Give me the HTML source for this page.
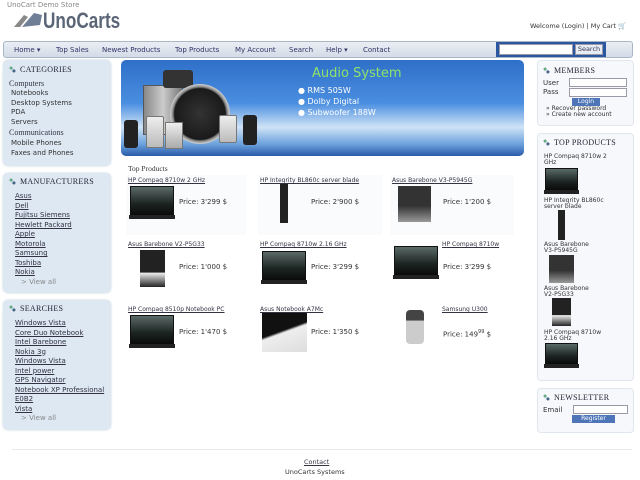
<!DOCTYPE html>
<html><head><meta charset="utf-8"><style>
*{margin:0;padding:0;box-sizing:border-box}
body{width:640px;height:480px;background:#fff;position:relative;overflow:hidden;font-family:"DejaVu Sans","Liberation Sans",sans-serif;font-size:7px;color:#333}
.a{position:absolute;white-space:nowrap}
a,.u{text-decoration:underline;color:#334}
.box{position:absolute;background:#dde8f3;border-radius:5px;box-shadow:0 0 2px #c8d4e0}
.rbox{position:absolute;background:#f6f8fb;border:1px solid #e0e6ee;border-radius:4px}
.h{font-family:"Liberation Serif",serif;font-size:8px;color:#223;letter-spacing:.3px}
.ic{display:inline-block;width:7px;height:7px;margin-right:4px;vertical-align:-1px;background:radial-gradient(circle at 30% 30%,#6a8 0,#6a8 20%,transparent 25%),radial-gradient(circle at 70% 70%,#468 0,#468 20%,transparent 25%)}
.nav span{position:absolute;top:4px;color:#336;font-size:7px}
.lap{position:absolute;background:linear-gradient(#5a6a66,#1c2422 60%,#0a0a0a);border:1px solid #111}
.lap:after{content:"";position:absolute;left:-2px;right:-2px;bottom:-4px;height:4px;background:#222}
.price{position:absolute;font-size:7px;color:#333}
.cell{position:absolute;background:#fafbfd}
</style></head><body>
<div class="a" style="left:7px;top:1px;font-size:7px;color:#888">UnoCart Demo Store</div>
<svg class="a" style="left:12px;top:11px" width="32" height="18"><path d="M2 16 L12 4 L16 6 L8 16Z" fill="#888"/><path d="M10 16 L22 2 L30 4 L28 14Z" fill="#6f7f95"/></svg>
<div class="a" style="left:43px;top:8px;font-family:'Liberation Sans',sans-serif;font-weight:bold;font-size:22px;color:#5a6577;transform:scaleX(0.78);transform-origin:0 0">UnoCarts</div>
<div class="a" style="left:530px;top:22px;font-size:6.5px;color:#333">Welcome (Login) | My Cart 🛒</div>

<div class="a nav" style="left:3px;top:41px;width:630px;height:17px;background:linear-gradient(#e9eef4,#d3dce7);border:1px solid #a9b6c6;border-radius:3px">
<span style="left:10px">Home ▾</span><span style="left:52px">Top Sales</span><span style="left:98px">Newest Products</span><span style="left:171px">Top Products</span><span style="left:231px">My Account</span><span style="left:285px">Search</span><span style="left:322px">Help ▾</span><span style="left:359px">Contact</span>
<div style="position:absolute;left:492px;top:0;width:110px;height:15px;background:#2b56a0"></div>
<div style="position:absolute;left:495px;top:2px;width:74px;height:11px;background:#fff;border:1px solid #99a"></div>
<div style="position:absolute;left:571px;top:2px;width:28px;height:11px;background:#e8edf4;border:1px solid #99a;font-size:6.5px;text-align:center;line-height:9px;color:#335">Search</div>
</div>

<div class="box" style="left:3px;top:60px;width:108px;height:106px"></div>
<div class="a h" style="left:9px;top:65px"><span class="ic"></span>CATEGORIES</div>
<div class="a" style="left:9px;top:79px;font-size:8px;color:#334;font-family:'Liberation Serif',serif">Computers</div>
<div class="a" style="left:11px;top:89px;line-height:9.5px">Notebooks<br>Desktop Systems<br>PDA<br>Servers</div>
<div class="a" style="left:9px;top:128px;font-size:8px;color:#334;font-family:'Liberation Serif',serif">Communications</div>
<div class="a" style="left:11px;top:139px;line-height:9.5px">Mobile Phones<br>Faxes and Phones</div>

<div class="box" style="left:3px;top:173px;width:108px;height:120px"></div>
<div class="a h" style="left:9px;top:177px"><span class="ic"></span>MANUFACTURERS</div>
<div class="a u" style="left:15px;top:192px;line-height:9.5px">Asus<br>Dell<br>Fujitsu Siemens<br>Hewlett Packard<br>Apple<br>Motorola<br>Samsung<br>Toshiba<br>Nokia</div>
<div class="a" style="left:21px;top:278px;color:#888">&gt; View all</div>

<div class="box" style="left:3px;top:300px;width:108px;height:130px"></div>
<div class="a h" style="left:9px;top:304px"><span class="ic"></span>SEARCHES</div>
<div class="a u" style="left:15px;top:319px;line-height:9.5px">Windows Vista<br>Core Duo Notebook<br>Intel Barebone<br>Nokia 3g<br>Windows Vista<br>Intel power<br>GPS Navigator<br>Notebook XP Professional<br>E0B2<br>Vista</div>
<div class="a" style="left:21px;top:414px;color:#888">&gt; View all</div>

<div class="a" style="left:121px;top:60px;width:403px;height:96px;border-radius:5px;background:linear-gradient(180deg,#2f6fc8 0,#4a8ee0 45%,#cfe3f6 70%,#6aa0dc 88%,#2a5aa8 100%)"></div>
<div class="a" style="left:143px;top:85px;width:40px;height:50px;background:linear-gradient(90deg,#888,#ccc,#777);border:1px solid #555"></div>
<div class="a" style="left:163px;top:70px;width:30px;height:18px;background:#333;border-radius:3px"></div>
<div class="a" style="left:170px;top:84px;width:60px;height:60px;border-radius:50%;background:radial-gradient(circle,#333 0,#1a1a1a 60%,#888 64%,#ccc 70%)"></div>
<div class="a" style="left:124px;top:120px;width:14px;height:28px;background:#222;border-radius:3px"></div>
<div class="a" style="left:243px;top:115px;width:14px;height:30px;background:#222;border-radius:3px"></div>
<div class="a" style="left:146px;top:116px;width:18px;height:32px;background:linear-gradient(#eee,#bbb);border:1px solid #777;border-radius:2px"></div>
<div class="a" style="left:165px;top:122px;width:18px;height:27px;background:linear-gradient(#eee,#aaa);border:1px solid #777"></div>
<div class="a" style="left:219px;top:115px;width:18px;height:28px;background:linear-gradient(#eee,#bbb);border:1px solid #777;border-radius:2px"></div>
<div class="a" style="left:312px;top:66px;font-size:13px;color:#8fe36a">Audio System</div>
<div class="a" style="left:298px;top:85px;font-size:8px;color:#fff;line-height:11px">● RMS 505W<br>● Dolby Digital<br>● Subwoofer 188W</div>

<div class="a" style="left:128px;top:164px;font-size:7.5px;color:#333;font-family:'Liberation Serif',serif">Top Products</div>

<div class="cell" style="left:126px;top:175px;width:120px;height:60px"></div>
<div class="cell" style="left:258px;top:175px;width:124px;height:60px"></div>
<div class="cell" style="left:390px;top:175px;width:124px;height:60px"></div>
<div class="a u" style="left:128px;top:177px;font-size:6px">HP Compaq 8710w 2 GHz</div>
<div class="a u" style="left:260px;top:177px;font-size:6px">HP Integrity BL860c server blade</div>
<div class="a u" style="left:392px;top:177px;font-size:6px">Asus Barebone V3-P5945G</div>
<div class="lap" style="left:130px;top:186px;width:44px;height:30px"></div>
<div class="a" style="left:280px;top:184px;width:8px;height:39px;background:#222"></div>
<div class="a" style="left:398px;top:186px;width:33px;height:36px;background:linear-gradient(#333 55%,#999)"></div>
<div class="price" style="left:179px;top:198px">Price: 3'299 $</div>
<div class="price" style="left:311px;top:198px">Price: 2'900 $</div>
<div class="price" style="left:443px;top:198px">Price: 1'200 $</div>

<div class="a u" style="left:128px;top:241px;font-size:6px">Asus Barebone V2-P5G33</div>
<div class="a u" style="left:260px;top:241px;font-size:6px">HP Compaq 8710w 2.16 GHz</div>
<div class="a u" style="left:442px;top:241px;font-size:6px">HP Compaq 8710w</div>
<div class="a" style="left:140px;top:250px;width:25px;height:37px;background:linear-gradient(#222 60%,#eee 62%,#222)"></div>
<div class="lap" style="left:262px;top:251px;width:44px;height:30px"></div>
<div class="lap" style="left:394px;top:246px;width:44px;height:30px"></div>
<div class="price" style="left:179px;top:263px">Price: 1'000 $</div>
<div class="price" style="left:311px;top:263px">Price: 3'299 $</div>
<div class="price" style="left:443px;top:263px">Price: 3'299 $</div>

<div class="a u" style="left:128px;top:306px;font-size:6px">HP Compaq 8510p Notebook PC</div>
<div class="a u" style="left:260px;top:306px;font-size:6px">Asus Notebook A7Mc</div>
<div class="a u" style="left:442px;top:306px;font-size:6px">Samsung U300</div>
<div class="lap" style="left:130px;top:315px;width:44px;height:30px"></div>
<div class="a" style="left:262px;top:313px;width:45px;height:39px;background:linear-gradient(160deg,#111 45%,#eee 50%,#ddd)"></div>
<div class="a" style="left:406px;top:310px;width:18px;height:34px;border-radius:4px;background:linear-gradient(#444 30%,#ccc 32%)"></div>
<div class="price" style="left:179px;top:328px">Price: 1'470 $</div>
<div class="price" style="left:311px;top:328px">Price: 1'350 $</div>
<div class="price" style="left:443px;top:329px">Price: 149<sup style="font-size:5px">99</sup> $</div>

<div class="rbox" style="left:537px;top:60px;width:97px;height:66px"></div>
<div class="a h" style="left:543px;top:66px"><span class="ic"></span>MEMBERS</div>
<div class="a" style="left:543px;top:79px;line-height:9px">User<br>Pass</div>
<div class="a" style="left:569px;top:78px;width:58px;height:9px;border:1px solid #99a;background:#fff"></div>
<div class="a" style="left:569px;top:88px;width:58px;height:9px;border:1px solid #99a;background:#fff"></div>
<div class="a" style="left:572px;top:98px;width:28px;height:8px;background:#4d75b8;color:#fff;font-size:6px;text-align:center;line-height:8px">Login</div>
<div class="a" style="left:546px;top:106px;font-size:6px;line-height:6px;color:#333">» Recover password<br>» Create new account</div>

<div class="rbox" style="left:537px;top:133px;width:97px;height:248px"></div>
<div class="a h" style="left:543px;top:138px"><span class="ic"></span>TOP PRODUCTS</div>
<div class="a" style="left:544px;top:154px;font-size:6px;line-height:5.5px">HP Compaq 8710w 2<br>GHz</div>
<div class="lap" style="left:545px;top:168px;width:33px;height:23px"></div>
<div class="a" style="left:544px;top:198px;font-size:6px;line-height:5.5px">HP Integrity BL860c<br>server blade</div>
<div class="a" style="left:558px;top:210px;width:7px;height:30px;background:#222"></div>
<div class="a" style="left:544px;top:242px;font-size:6px;line-height:5.5px">Asus Barebone<br>V3-P5945G</div>
<div class="a" style="left:549px;top:255px;width:25px;height:28px;background:linear-gradient(#333 55%,#999)"></div>
<div class="a" style="left:544px;top:286px;font-size:6px;line-height:5.5px">Asus Barebone<br>V2-P5G33</div>
<div class="a" style="left:552px;top:298px;width:19px;height:28px;background:linear-gradient(#222 60%,#eee 62%,#222)"></div>
<div class="a" style="left:544px;top:330px;font-size:6px;line-height:5.5px">HP Compaq 8710w<br>2.16 GHz</div>
<div class="lap" style="left:545px;top:343px;width:33px;height:22px"></div>

<div class="rbox" style="left:537px;top:388px;width:97px;height:45px"></div>
<div class="a h" style="left:543px;top:393px"><span class="ic"></span>NEWSLETTER</div>
<div class="a" style="left:543px;top:406px">Email</div>
<div class="a" style="left:573px;top:405px;width:55px;height:9px;border:1px solid #99a;background:#fff"></div>
<div class="a" style="left:572px;top:415px;width:43px;height:8px;background:#4d75b8;color:#fff;font-size:6px;text-align:center;line-height:8px">Register</div>

<div class="a" style="left:12px;top:449px;width:620px;height:1px;background:#e6e9ee"></div>
<div class="a u" style="left:304px;top:458px;font-size:6.5px">Contact</div>
<div class="a" style="left:285px;top:468px;font-size:6.5px">UnoCarts Systems</div>
</body></html>
